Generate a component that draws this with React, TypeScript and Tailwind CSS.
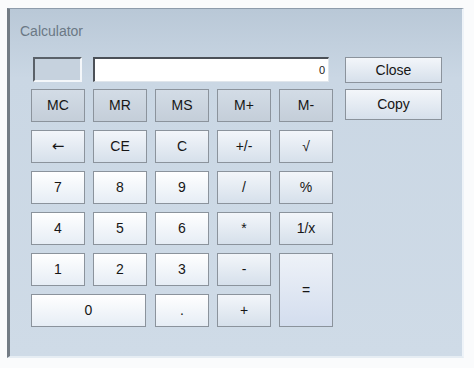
const font = { fontFamily: '"Liberation Sans", Arial, sans-serif' };

type Kind = "mem" | "op" | "digit" | "eq";

const kindClass: Record<Kind, string> = {
  mem: "bg-gradient-to-b from-[#d3dce6] to-[#c4ced9]",
  op: "bg-gradient-to-b from-[#f3f6fa] to-[#d6e0eb]",
  digit: "bg-gradient-to-b from-[#ffffff] to-[#e6edf5]",
  eq: "bg-gradient-to-b from-[#eef2f8] to-[#d3ddee]",
};

function Key({
  label,
  kind,
  className = "",
}: {
  label: string;
  kind: Kind;
  className?: string;
}) {
  return (
    <button
      className={`flex items-center justify-center border border-[#8b939c] text-[14px] text-[#161616] ${kindClass[kind]} ${className}`}
    >
      {label}
    </button>
  );
}

export default function App() {
  return (
    <div
      className="h-[368px] w-[474px] overflow-hidden bg-[#fafbfc] pl-[7px] pt-[8px]"
      style={font}
    >
      <div className="flex h-[350px] w-[457px] flex-col border-l-[3px] border-t border-r-2 border-b-2 border-l-[#737c85] border-t-[#8e9cab] border-r-[#eef3f8] border-b-[#e6edf3] bg-gradient-to-b from-[#b9c8d7] via-[#cad7e4] via-20% to-[#cfdbe7]">
        <div className="flex h-[40px] items-center pl-[10px] pt-[4px] text-[14px] text-[#6b7885]">
          Calculator
        </div>

        <div className="flex pl-[21px] pt-[8px]">
          <div className="flex w-[302px] flex-col">
            <div className="flex h-[25px] items-stretch">
              <div className="ml-[2px] w-[49px] border-2 border-l-[#5a6169] border-t-[#5a6169] border-r-[#f4f7fa] border-b-[#f4f7fa] bg-[#c6d2de]" />
              <div className="ml-[11px] flex w-[236px] items-center justify-end border-l-2 border-t-2 border-r border-b border-l-[#4b5057] border-t-[#4b5057] border-r-[#dfe5eb] border-b-[#dfe5eb] bg-white pr-[3px] text-[11px] text-[#222]">
                0
              </div>
            </div>

            <div className="mt-[7px] grid grid-cols-[repeat(5,54px)] grid-rows-[repeat(6,33px)] gap-[8px]">
              <Key label="MC" kind="mem" />
              <Key label="MR" kind="mem" />
              <Key label="MS" kind="mem" />
              <Key label="M+" kind="mem" />
              <Key label="M-" kind="mem" />

              <Key label="←" kind="op" className="font-['DejaVu_Sans'] text-[15px]" />
              <Key label="CE" kind="op" />
              <Key label="C" kind="op" />
              <Key label="+/-" kind="op" />
              <Key label="√" kind="op" />

              <Key label="7" kind="digit" />
              <Key label="8" kind="digit" />
              <Key label="9" kind="digit" />
              <Key label="/" kind="op" />
              <Key label="%" kind="op" />

              <Key label="4" kind="digit" />
              <Key label="5" kind="digit" />
              <Key label="6" kind="digit" />
              <Key label="*" kind="op" />
              <Key label="1/x" kind="op" />

              <Key label="1" kind="digit" />
              <Key label="2" kind="digit" />
              <Key label="3" kind="digit" />
              <Key label="-" kind="op" />
              <Key label="=" kind="eq" className="row-span-2" />

              <Key label="0" kind="digit" className="col-span-2 w-[115px]" />
              <Key label="." kind="digit" />
              <Key label="+" kind="op" />
            </div>
          </div>

          <div className="ml-[12px] flex w-[97px] flex-col gap-[6px]">
            <Key label="Close" kind="op" className="h-[26px]" />
            <Key label="Copy" kind="op" className="h-[31px]" />
          </div>
        </div>
      </div>
    </div>
  );
}
